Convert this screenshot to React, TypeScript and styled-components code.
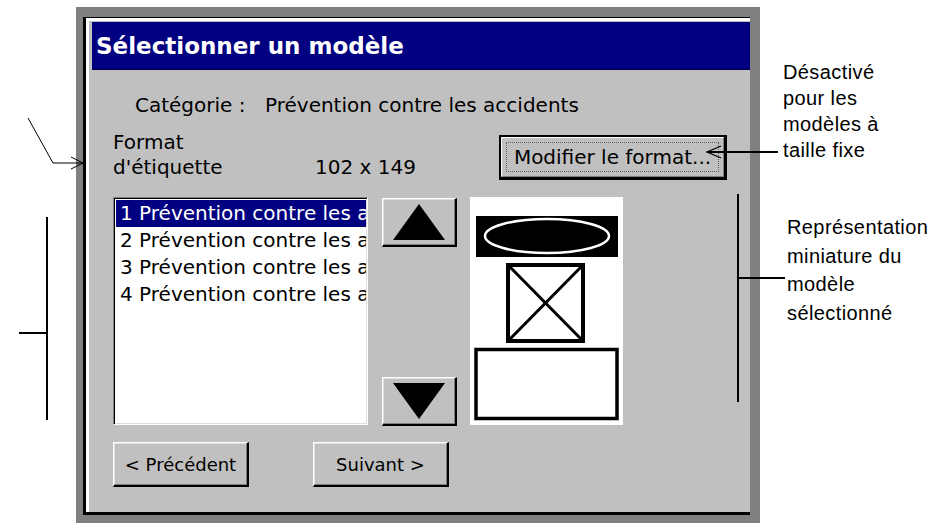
import React from "react";
import styled, { createGlobalStyle, css } from "styled-components";

const GlobalStyle = createGlobalStyle`
  html, body { margin: 0; padding: 0; background: #fff; }
  body { font-family: "DejaVu Sans", Verdana, sans-serif; }
  * { box-sizing: border-box; }
`;

const Page = styled.div`
  position: relative;
  width: 945px;
  height: 528px;
  overflow: hidden;
  display: flex;
  padding-top: 7px;
  background: #fff;
`;

const LeftGutter = styled.div`
  width: 76px;
  flex: none;
`;

const Frame = styled.div`
  width: 684px;
  height: 516px;
  flex: none;
  background: #808080;
  padding: 10px 10px 8px 7px;
  display: flex;
`;

const Window = styled.div`
  flex: 1;
  display: flex;
  flex-direction: column;
  background: #c0c0c0;
  border-left: 3px solid #000;
  border-top: 1px solid #000;
  border-bottom: 3px solid #000;
  box-shadow: inset 3px 3px 0 #fff;
  padding: 4px 0 0 6px;
`;

const TitleBar = styled.div`
  height: 48px;
  flex: none;
  background: #000080;
  color: #fff;
  display: flex;
  align-items: center;
  padding-left: 4px;
  font-family: "DejaVu Sans", Verdana, sans-serif;
  font-weight: bold;
  font-size: 23px;
  letter-spacing: 0px;
  border-bottom: 1px solid #000040;
`;

const Body = styled.div`
  display: flex;
  flex-direction: column;
  padding-left: 21px;
  font-family: "DejaVu Sans", Verdana, sans-serif;
  font-size: 20px;
  color: #000;
`;

const CategoryRow = styled.div`
  margin-top: 23px;
  height: 24px;
  line-height: 24px;
  padding-left: 22px;
  display: flex;
  white-space: nowrap;
`;

const CategoryLabel = styled.span`
  width: 130px;
  flex: none;
`;

const FormatRow = styled.div`
  margin-top: 13px;
  display: flex;
  align-items: flex-start;
  height: 50px;
`;

const FormatLabel = styled.div`
  width: 202px;
  flex: none;
  line-height: 25px;
`;

const FormatValue = styled.div`
  width: 184px;
  flex: none;
  line-height: 25px;
  padding-top: 25px;
`;

const raised = css`
  background: #c0c0c0;
  border-style: solid;
  border-width: 1px 2px 2px 1px;
  border-color: #fff #000 #000 #fff;
  box-shadow: inset -1px -1px 0 #808080, inset 1px 1px 0 #dfdfdf;
`;

const DefaultButton = styled.div`
  margin-top: 5px;
  width: 228px;
  height: 45px;
  flex: none;
  border-style: solid;
  border-color: #000;
  border-width: 2px 3px 3px 2px;
  display: flex;
  padding: 0;
`;

const DefaultInner = styled.div`
  flex: 1;
  ${raised};
  border-width: 1px;
  border-color: #fff #808080 #808080 #fff;
  box-shadow: none;
  display: flex;
  align-items: center;
  justify-content: center;
  padding: 4px;
`;

const FocusText = styled.span`
  flex: 1;
  height: 100%;
  display: flex;
  align-items: center;
  justify-content: center;
  border: 1px dotted #606060;
  white-space: nowrap;
`;

const MainRow = styled.div`
  margin-top: 17px;
  display: flex;
  align-items: flex-start;
  height: 229px;
`;

const ListBox = styled.div`
  width: 255px;
  height: 228px;
  flex: none;
  background: #fff;
  border-style: solid;
  border-width: 1px;
  border-color: #808080 #fff #fff #808080;
  box-shadow: inset 1px 1px 0 #000, inset -1px -1px 0 #dfdfdf;
  padding: 2px 1px 0 2px;
  overflow: hidden;
`;

const ListItem = styled.div<{ $selected?: boolean }>`
  height: 27px;
  line-height: 27px;
  padding-left: 4px;
  white-space: nowrap;
  overflow: hidden;
  background: ${(p) => (p.$selected ? "#000080" : "transparent")};
  color: ${(p) => (p.$selected ? "#fff" : "#000")};
`;

const ArrowColumn = styled.div`
  margin-left: 14px;
  width: 75px;
  height: 229px;
  flex: none;
  display: flex;
  flex-direction: column;
  justify-content: space-between;
  padding-top: 1px;
`;

const ArrowButton = styled.div`
  ${raised};
  width: 75px;
  height: 49px;
  display: flex;
  align-items: center;
  justify-content: center;
`;

const Preview = styled.div`
  margin-left: 13px;
  width: 153px;
  height: 228px;
  flex: none;
  background: #fff;
`;

const NavRow = styled.div`
  margin-top: 16px;
  display: flex;
  gap: 64px;
`;

const NavButton = styled.div`
  ${raised};
  width: 136px;
  height: 45px;
  display: flex;
  align-items: center;
  justify-content: center;
  white-space: nowrap;
  font-size: 18px;
`;

const RightColumn = styled.div`
  flex: 1;
  display: flex;
  flex-direction: column;
  font-family: "Liberation Sans", Arial, sans-serif;
  font-size: 20px;
  color: #000;
`;

const Note = styled.div<{ $top: number; $left: number; $lh: number }>`
  margin-top: ${(p) => p.$top}px;
  padding-left: ${(p) => p.$left}px;
  line-height: ${(p) => p.$lh}px;
  letter-spacing: 0.4px;
  white-space: nowrap;
`;

const Overlay = styled.svg`
  position: absolute;
  left: 0;
  top: 0;
  pointer-events: none;
`;

const items = [
  "1 Prévention contre les accidents",
  "2 Prévention contre les accidents",
  "3 Prévention contre les accidents",
  "4 Prévention contre les accidents",
];

export default function App() {
  return (
    <>
      <GlobalStyle />
      <Page>
        <LeftGutter />
        <Frame>
          <Window>
            <TitleBar>Sélectionner un modèle</TitleBar>
            <Body>
              <CategoryRow>
                <CategoryLabel>Catégorie :</CategoryLabel>
                <span>Prévention contre les accidents</span>
              </CategoryRow>
              <FormatRow>
                <FormatLabel>
                  Format
                  <br />
                  d'étiquette
                </FormatLabel>
                <FormatValue>102 x 149</FormatValue>
                <DefaultButton>
                  <DefaultInner>
                    <FocusText>Modifier le format...</FocusText>
                  </DefaultInner>
                </DefaultButton>
              </FormatRow>
              <MainRow>
                <ListBox>
                  {items.map((t, i) => (
                    <ListItem key={i} $selected={i === 0}>
                      {t}
                    </ListItem>
                  ))}
                </ListBox>
                <ArrowColumn>
                  <ArrowButton>
                    <svg width="52" height="36" viewBox="0 0 52 36">
                      <polygon points="26,0 52,36 0,36" fill="#000" />
                    </svg>
                  </ArrowButton>
                  <ArrowButton>
                    <svg width="52" height="36" viewBox="0 0 52 36">
                      <polygon points="0,0 52,0 26,36" fill="#000" />
                    </svg>
                  </ArrowButton>
                </ArrowColumn>
                <Preview>
                  <svg width="153" height="228" viewBox="0 0 153 228">
                    <rect x="6" y="19" width="142" height="41" fill="#000" />
                    <ellipse cx="77" cy="39" rx="62" ry="17" fill="#000" stroke="#fff" strokeWidth="2.5" />
                    <rect x="38" y="68" width="75" height="76" fill="#fff" stroke="#000" strokeWidth="4" />
                    <line x1="40" y1="70" x2="111" y2="142" stroke="#000" strokeWidth="3" />
                    <line x1="111" y1="70" x2="40" y2="142" stroke="#000" strokeWidth="3" />
                    <rect x="6" y="152.5" width="141" height="69" fill="#fff" stroke="#000" strokeWidth="3.5" />
                  </svg>
                </Preview>
              </MainRow>
              <NavRow>
                <NavButton>&lt; Précédent</NavButton>
                <NavButton>Suivant &gt;</NavButton>
              </NavRow>
            </Body>
          </Window>
        </Frame>
        <RightColumn>
          <Note $top={52} $left={23} $lh={26}>
            Désactivé
            <br />
            pour les
            <br />
            modèles à
            <br />
            taille fixe
          </Note>
          <Note $top={50} $left={27} $lh={28.5}>
            Représentation
            <br />
            miniature du
            <br />
            modèle
            <br />
            sélectionné
          </Note>
        </RightColumn>
        <Overlay width="945" height="528" viewBox="0 0 945 528">
          <g stroke="#000" fill="none" strokeWidth="1">
            <polyline points="28,118 53,163 83,163" />
            <polyline points="71,157 83,163 71,169" />
          </g>
          <g stroke="#000" fill="none" strokeWidth="2">
            <line x1="47" y1="217" x2="47" y2="420" />
            <line x1="19" y1="333" x2="47" y2="333" />
            <line x1="707" y1="152" x2="778" y2="152" />
            <line x1="738" y1="194" x2="738" y2="402" />
            <line x1="738" y1="278" x2="785" y2="278" />
          </g>
          <polyline points="721,146 707,152 721,158" stroke="#000" fill="none" strokeWidth="1.3" />
        </Overlay>
      </Page>
    </>
  );
}
